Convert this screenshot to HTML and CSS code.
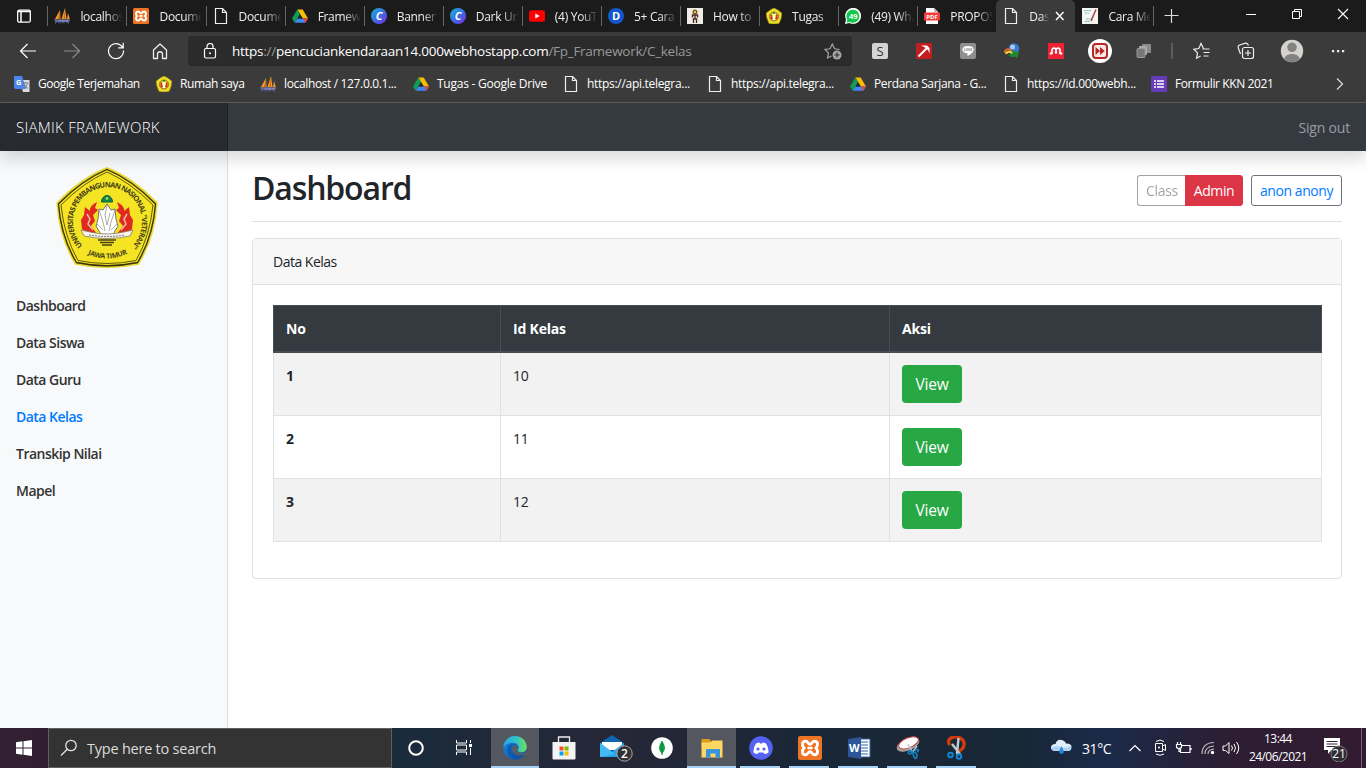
FILE: index.html
```html
<!DOCTYPE html>
<html lang="id">
<head>
<meta charset="utf-8">
<title>Dashboard</title>
<link rel="stylesheet" href="styles.css">
</head>
<body>
<svg class="defs" width="0" height="0" aria-hidden="true">
  <defs>
    <linearGradient id="canva" x1="0" y1="0" x2="1" y2="1"><stop offset="0" stop-color="#13b5d8"/><stop offset=".5" stop-color="#3b6fe0"/><stop offset="1" stop-color="#7c2ae8"/></linearGradient>
    <linearGradient id="edgeA" x1="0" y1="0" x2="1" y2="0"><stop offset="0" stop-color="#2aa5e8"/><stop offset=".55" stop-color="#2fc3c6"/><stop offset="1" stop-color="#72e05a"/></linearGradient>
    <linearGradient id="edgeB" x1="0" y1="0" x2="1" y2="1"><stop offset="0" stop-color="#1b8fe0"/><stop offset="1" stop-color="#0c4c9c"/></linearGradient>
  </defs>
  <symbol id="i-page" viewBox="0 0 16 16"><path d="M2.500.5h7l4 4v11h-11zM9.500.5v4h4" fill="none" stroke="#eee" stroke-width="1.200"/></symbol>
  <symbol id="i-pma" viewBox="0 0 16 16"><path d="M1 11 6 2l.5 9zM7.500 11 11 0l1.500 11zM13 11l1-6 1.800 6z" fill="#f39a2b"/><path d="M4 11 6 2v9zM9.500 11 11 0v11z" fill="#c96a15"/><path d="M0 11.500h16l-1 2.500H2z" fill="#8c8fb8"/><path d="M1.500 15.500v-3h2v1.500h-2M5 15.500v-3l1.500 2 1.500-2v3M10 15.500v-1.500l1.500-1.500 1.500 1.500v1.500M14.500 12.500v3" fill="none" stroke="#595d94"/></symbol>
  <symbol id="i-xampp" viewBox="0 0 16 16"><rect width="16" height="16" rx="1.500" fill="#ee7425"/><path d="M5 3.500c-2.500 0-2.500 3-1 4.500-1.500 1.500-1.500 4.500 1 4.500 2 0 1.500-2 3-2s1 2 3 2c2.500 0 2.500-3 1-4.500 1.500-1.500 1.500-4.500-1-4.500-2 0-1.500 2-3 2s-1-2-3-2Z" fill="none" stroke="#fff" stroke-width="1.900"/><path d="M6.300 8h3.400" stroke="#fff" stroke-width="1.700"/></symbol>
  <symbol id="i-drive" viewBox="0 0 16 16"><path d="M5.300 1.500h5.400L16 10.500h-5.200z" fill="#fbbc04"/><path d="M5.300 1.500 0 10.500l2.700 4.300L8 6z" fill="#0f9d58"/><path d="M5.400 10.500H16l-2.700 4.300H2.700z" fill="#4285f4"/><path d="m13 10.500 3 0-2.700 4.300-2.300-4.300z" fill="#ea4335"/><path d="M8 6.200 5.600 10.500h5z" fill="#252525"/></symbol>
  <symbol id="i-canva" viewBox="0 0 16 16"><circle cx="8" cy="8" r="8" fill="url(#canva)"/><text x="8" y="12" text-anchor="middle" class="g-canva">C</text></symbol>
  <symbol id="i-upn" viewBox="0 0 16 16"><path d="M8 0q4 1.500 8 5.300-.3 5.500-3 10.200-5 1-10 0Q.3 10.500 0 5.300 4 1.500 8 0Z" fill="#f2df25" stroke="#8c8020" stroke-width=".7"/><circle cx="8" cy="8.500" r="4.500" fill="none" stroke="#756c2a" stroke-width=".9"/><path d="M5 6.500 6.500 11H5zM11 6.500 9.500 11H11z" fill="#d52a20" stroke="#d52a20"/><path d="M8 6v6" stroke="#fff" stroke-width="2.300"/><circle cx="8" cy="5" r="1" fill="#168250"/></symbol>
</svg>

<div class="screen">
  <header class="browser">
    <div class="tabs">
      <div class="tab-menu"><svg width="16" height="16" viewBox="0 0 16 16"><rect x="1.700" y="2.200" width="12.600" height="12" rx="1.500" fill="none" stroke="#fff" stroke-width="1.300"/><path d="M1.500 3.500h13M5 4v10" stroke="#fff" stroke-width="1.500"/></svg></div>
      <div class="tab"><svg class="ico"><use href="#i-pma"/></svg><span>localhost</span></div>
      <div class="tab"><svg class="ico"><use href="#i-xampp"/></svg><span>Document</span></div>
      <div class="tab"><svg class="ico"><use href="#i-page"/></svg><span>Document</span></div>
      <div class="tab"><svg class="ico"><use href="#i-drive"/></svg><span>Framework</span></div>
      <div class="tab"><svg class="ico"><use href="#i-canva"/></svg><span>Banner Y</span></div>
      <div class="tab"><svg class="ico"><use href="#i-canva"/></svg><span>Dark Urba</span></div>
      <div class="tab"><svg class="ico" viewBox="0 0 16 16"><rect y="2.300" width="16" height="11.500" rx="2.500" fill="#f00"/><path d="m6.300 5.500 4.500 2.500-4.500 2.600z" fill="#fff"/></svg><span>(4) YouTu</span></div>
      <div class="tab"><svg class="ico" viewBox="0 0 16 16"><circle cx="8" cy="8" r="8" fill="#1258cc"/><text x="8" y="12" text-anchor="middle" class="g-d">D</text></svg><span>5+ Cara</span></div>
      <div class="tab"><svg class="ico" viewBox="0 0 16 16"><rect width="16" height="16" fill="#efede4"/><path d="M5.500 9.500V7h5v2.500M8 7v4M6.500 15v-4h3v4" fill="none" stroke="#4b251d" stroke-width="1.300"/><circle cx="8" cy="4" r="2" fill="#e8c632" stroke="#4b251d"/></svg><span>How to</span></div>
      <div class="tab"><svg class="ico"><use href="#i-upn"/></svg><span>Tugas</span></div>
      <div class="tab"><svg class="ico" viewBox="0 0 16 16"><path d="M0 16 1 11.500A8 8 0 1 1 4.500 15z" fill="#fff"/><path d="m1.700 14.500.6-3a6.500 6.500 0 1 1 2.500 2.400z" fill="#12c74b"/><text x="8.200" y="10.900" text-anchor="middle" class="g-wa">49</text></svg><span>(49) Wha</span></div>
      <div class="tab"><svg class="ico" viewBox="0 0 16 16"><path d="M2 0h8l4 4v12H2z" fill="#fff"/><path d="M10 0v4h4" fill="#bbb"/><rect y="4.500" width="16" height="8" rx="1" fill="#f73a38"/><text x="8" y="10.900" text-anchor="middle" class="g-pdf">PDF</text></svg><span>PROPOSA</span></div>
      <div class="tab active"><svg class="ico"><use href="#i-page"/></svg><span>Dashb</span><svg class="tab-x" width="10" height="10" viewBox="0 0 10 10"><path d="m1 1 7.500 8M8.500 1 1 9" stroke="#fff" stroke-width="1.500"/></svg></div>
      <div class="tab last"><svg class="ico" viewBox="0 0 16 16"><rect width="16" height="16" fill="#f4f4f1"/><path d="M2 2.500h7M3 5h4M4 11h6M3 13.500h5" stroke="#7abad6" stroke-dasharray="2 .5"/><path d="M14 1.500 9 13" stroke="#a9403a" stroke-width="1.500"/></svg><span>Cara Men</span></div>
      <svg class="plus" width="15" height="15" viewBox="0 0 15 15"><path d="M7.500 1v14M.500 7.500h14" stroke="#ddd" stroke-width="1.200"/></svg>
      <div class="win">
        <svg width="12" height="12"><path d="M1 6.500h10" stroke="#fff"/></svg>
        <svg width="12" height="12"><path d="M1.500 3.500h7v7h-7zM3.500 3.500v-2h7v7h-2" fill="none" stroke="#fff"/></svg>
        <svg width="12" height="12"><path d="m1 1 10 10M11 1 1 11" stroke="#fff" stroke-width="1.100"/></svg>
      </div>
    </div>

    <div class="toolbar">
      <div class="nav-btns">
        <svg width="18" height="18" viewBox="0 0 18 18"><path d="M17 9H1.500M8.500 2l-7 7 7 7" fill="none" stroke="#fff" stroke-width="1.200"/></svg>
        <svg width="18" height="18" viewBox="0 0 18 18"><path d="M1 9h15.500M9.500 2l7 7-7 7" fill="none" stroke="#8a8a8a" stroke-width="1.200"/></svg>
        <svg width="18" height="18" viewBox="0 0 18 18"><path d="M16.500 8.500A7.500 7.500 0 1 1 14 3.500l2 2M16.200.8v5h-5" fill="none" stroke="#fff" stroke-width="1.200"/></svg>
        <svg width="18" height="18" viewBox="0 0 18 18"><path d="M2.500 8 9 2l6.500 6v8.500h-4V12c0-3-5-3-5 0v4.500h-4z" fill="none" stroke="#eee" stroke-width="1.300" stroke-linejoin="round"/></svg>
      </div>
      <div class="address">
        <svg width="14" height="16" viewBox="0 0 14 16"><rect x="1.500" y="5.500" width="11" height="9.500" rx="1.500" fill="none" stroke="#fff" stroke-width="1.200"/><path d="M4 5.500v-2c0-4 6-4 6 0v2" fill="none" stroke="#fff" stroke-width="1.200"/><circle cx="7" cy="10.300" r="1" fill="#fff"/></svg>
        <div class="url">https<i>://</i>pencuciankendaraan14.000webhostapp.com<i>/Fp_Framework/C_kelas</i></div>
        <svg width="18" height="17" viewBox="0 0 18 17"><path d="M7.500 13 3.500 15l1-5L1 6.500l5-.7L8.300 1l2.300 4.800 5 .7" fill="none" stroke="#a6a6a6" stroke-width="1.200"/><circle cx="13" cy="12" r="4.500" fill="#a6a6a6"/><path d="M13 9.500v5M10.500 12h5" stroke="#2b2b2b" stroke-width="1.200"/></svg>
      </div>
      <div class="ext">
        <svg class="ico" viewBox="0 0 16 16"><rect width="16" height="16" rx="2" fill="#d4d4d4"/><text x="8" y="12.500" text-anchor="middle" class="g-s">S</text></svg>
        <svg class="ico" viewBox="0 0 16 16"><rect width="16" height="16" rx="1" fill="#c01f1f"/><path d="M2.500 13.500 12 4" fill="none" stroke="#fff" stroke-width="1.900"/><path d="M5 2.500h6l2.500 2.500v6q-1-4-3-5.500T5 2.500" fill="#fff"/></svg>
        <svg class="ico" viewBox="0 0 16 16"><rect width="16" height="16" rx="2" fill="#8f8f8f"/><path d="M8 3C.3 3 1 10 7.500 10.500v2.500C16 9 15.500 3 8 3" fill="#fff"/><text x="8" y="8.300" text-anchor="middle" class="g-line">LINE</text></svg>
        <svg class="ico" viewBox="0 0 16 16"><circle cx="10" cy="5.500" r="5.300" fill="#397bd2"/><circle cx="8.500" cy="4" r="2.500" fill="#a7cbf2"/><path d="M.5 10C1 6 4 5 8 8" fill="none" stroke="#e8662a" stroke-width="2"/><path d="M2 11c1-3 4-3 7 0" fill="none" stroke="#e9df32" stroke-width="2"/><path d="M4 11.500c3 .5 4-.5 5-2.500L7.500 7l7.500 2.500-2 6-1.500-2c-3 1.500-6 0-7.500-2" fill="#1c8b2c"/></svg>
        <svg class="ico" viewBox="0 0 16 16"><rect width="16" height="16" fill="#ee2233"/><path d="M4 11V7c0-2.500 4-2.500 4 0v2M8 9V7c0-2.500 4-2.500 4 0v4" fill="none" stroke="#fff" stroke-width="1.700"/><circle cx="3" cy="10.500" r="1.300" fill="#fff"/><circle cx="8" cy="9.500" r="1.300" fill="#fff"/><circle cx="13" cy="10.500" r="1.300" fill="#fff"/></svg>
        <svg width="24" height="24" viewBox="0 0 24 24"><circle cx="12" cy="12" r="12" fill="#fff"/><rect x="5" y="5" width="14" height="14" rx="3" fill="#f8e7e5" stroke="#b62824" stroke-width="2"/><path d="m7.500 8 4.500 4-4.500 4zM12 8l4.800 4-4.800 4z" fill="#b62824"/></svg>
        <svg class="ico" viewBox="0 0 16 16"><rect x="6" y="1" width="9" height="9" rx="1" fill="#8a8a8a"/><rect x="3" y="3" width="8" height="9" rx="1" fill="#aaa"/><rect x="1" y="5.500" width="8" height="9" rx="1" fill="#777" stroke="#999"/></svg>
      </div>
      <div class="toolbar-sep"></div>
      <div class="ext end">
        <svg width="18" height="18" viewBox="0 0 18 18"><path d="M10.500 6.500 8 1.500 5.800 6.500.8 7.300l3.700 3.600-.9 5.300 4-2.300M9.500 7h7M10.500 10.500h6M10.500 14h5" fill="none" stroke="#eee" stroke-width="1.200"/></svg>
        <svg width="18" height="18" viewBox="0 0 18 18"><rect x="5.500" y="5.500" width="11" height="11" rx="2" fill="none" stroke="#eee" stroke-width="1.200"/><path d="M11 8v6M8 11h6M3.500 12 1.300 6C1 4.800 1.300 3.500 2.600 3L8.500 1.200c1.400-.3 2.300.3 3 2.300" fill="none" stroke="#eee" stroke-width="1.200"/></svg>
        <svg width="24" height="24" viewBox="0 0 24 24"><clipPath id="av"><circle cx="12" cy="12" r="11.200"/></clipPath><g clip-path="url(#av)"><path d="M0 0h24v24H0z" fill="#d5d3d0"/><circle cx="12" cy="8.300" r="4.800" fill="#858381"/><path d="M4 24v-3c0-8 16-8 16 0v3z" fill="#858381"/></g></svg>
        <svg width="16" height="16" viewBox="0 0 16 16"><path d="M2 7h2.200v2.200H2zM7 7h2.200v2.200H7zM12 7h2.200v2.200H12z" fill="#eee"/></svg>
      </div>
    </div>

    <div class="bookmarks">
      <div class="bm"><svg class="ico" viewBox="0 0 16 16"><path d="M6 4h9.500v12H9z" fill="#d8dadb"/><path d="M0 0h8l4 13H1.500Q0 13 0 11z" fill="#4c86ec"/><text x="4.700" y="8.700" text-anchor="middle" class="g-gt">G</text><path d="M9 7h5.500M11.500 6v1M10 7.500q1 4 4 5M13.500 7.500q-1 4-4 5" fill="none" stroke="#6f7b83" stroke-width=".9"/></svg><span class="b1">Google Terjemahan</span></div>
      <div class="bm"><svg class="ico"><use href="#i-upn"/></svg><span class="b2">Rumah saya</span></div>
      <div class="bm"><svg class="ico"><use href="#i-pma"/></svg><span class="b3">localhost / 127.0.0.1...</span></div>
      <div class="bm"><svg class="ico"><use href="#i-drive"/></svg><span class="b4">Tugas - Google Drive</span></div>
      <div class="bm"><svg class="ico"><use href="#i-page"/></svg><span class="b5">https://api.telegra...</span></div>
      <div class="bm"><svg class="ico"><use href="#i-page"/></svg><span class="b5">https://api.telegra...</span></div>
      <div class="bm"><svg class="ico"><use href="#i-drive"/></svg><span class="b7">Perdana Sarjana - G...</span></div>
      <div class="bm"><svg class="ico"><use href="#i-page"/></svg><span class="b8">https://id.000webh...</span></div>
      <div class="bm"><svg class="ico" viewBox="0 0 16 16"><rect width="16" height="16" rx="1" fill="#673ab7"/><path d="M3 5h2M3 8h2M3 11h2M6 5h7M6 8h7M6 11h7" stroke="#fff" stroke-width="1.600"/></svg><span class="b9">Formulir KKN 2021</span></div>
      <svg width="8" height="12" viewBox="0 0 8 12"><path d="m1 .5 5.500 5.500L1 11.500" fill="none" stroke="#ddd" stroke-width="1.200"/></svg>
    </div>
  </header>

  <div class="page">
    <nav class="navbar"><a class="brand">SIAMIK FRAMEWORK</a><a class="signout">Sign out</a></nav>
    <div class="body">
      <aside class="sidebar">
        <svg class="logo" width="102" height="102" viewBox="0 0 102 102">
          <defs><path id="arc" d="M28 80A34.500 34.500 0 1 1 75 80"/><path id="base" d="M29 86Q51 97 73 86"/></defs>
          <path d="M51 .8Q77 11 101 36 99 70 82.500 97 51 104 19.500 97 3 70 1 36 25 11 51 .8Z" fill="#b9a914" stroke="#e7dc3e" stroke-width="1.500"/>
          <path d="M51 2.500Q76 13 99.500 37 97 70 81.500 95.500 51 102 20.500 95.500 5 70 2.500 37 26 13 51 2.500Z" fill="#f4e424" stroke="#38310c" stroke-width="1.300"/>
          <path d="M51 5Q74 15 97 38 94 69 80 93.500 51 99.500 22 93.500 8 69 5 38 28 15 51 5Z" fill="none" stroke="#50480f" stroke-width=".9"/>
          <text class="g-arc"><textPath href="#arc" textLength="162" startOffset="2">UNIVERSITAS PEMBANGUNAN NASIONAL "VETERAN"</textPath></text>
          <text class="g-base"><textPath href="#base" textLength="41" startOffset="3">JAWA TIMUR</textPath></text>
          <path d="M41 35q-8 4-7 9l-5-4-1 8-3 5 1 9 5 5h10l-6-8 4-5-2-6 5-5-3-2zM61 35q8 4 7 9l5-4 1 8 3 5-1 9-5 5H61l6-8-4-5 2-6-5-5 3-2z" fill="#df2a20"/>
          <path d="m31 47 3 5-2 5 5 6M71 47l-3 5 2 5-5 6" fill="none" stroke="#f7b7a6" stroke-width="1.500"/>
          <path d="M45.500 35a5.500 6.500 0 0 1 11 0z" fill="#12854c" stroke="#096036"/><circle cx="51" cy="31.500" r="1.300" fill="#c9dc64"/>
          <path d="m51 37-4 6-4-1-1 10-2 7 6 10h10l6-10-2-7-1-10-4 1z" fill="#fff" stroke="#75736a"/>
          <path d="m51 38-2 10 2 10 3-12M43 43l4 12 2 9M59 43l-4 12-2 9M40 56l7 7M62 56l-7 7" fill="none" stroke="#99978e" stroke-width=".8"/>
          <path d="m25 63 9 2q17 4 34 0l9-2-3 6q-23 5-46 0z" fill="#f7f5eb" stroke="#807b67" stroke-width=".8"/><path d="M33 68q18 3 36 0" fill="none" stroke="#777" stroke-dasharray="2 1"/>
          <path d="M42 73h18M44 75.500h14M46 78h10" stroke="#494112" stroke-width="1.500"/>
        </svg>
        <ul class="menu"><li>Dashboard</li><li>Data Siswa</li><li>Data Guru</li><li class="current">Data Kelas</li><li>Transkip Nilai</li><li>Mapel</li></ul>
      </aside>
      <main class="main">
        <div class="head">
          <h1>Dashboard</h1>
          <div class="actions">
            <div class="group"><button class="btn cls" disabled>Class</button><button class="btn admin">Admin</button></div>
            <button class="btn user">anon anony</button>
          </div>
        </div>
        <section class="card">
          <div class="card-head"><span>Data Kelas</span></div>
          <div class="card-body">
            <table>
              <colgroup><col class="c1"><col class="c2"><col class="c3"></colgroup>
              <thead><tr><th>No</th><th>Id Kelas</th><th>Aksi</th></tr></thead>
              <tbody>
                <tr><th>1</th><td>10</td><td><a class="view">View</a></td></tr>
                <tr><th>2</th><td>11</td><td><a class="view">View</a></td></tr>
                <tr><th>3</th><td>12</td><td><a class="view">View</a></td></tr>
              </tbody>
            </table>
          </div>
        </section>
      </main>
    </div>
  </div>

  <footer class="taskbar">
    <div class="start"><svg width="16" height="16" viewBox="0 0 16 16"><path d="M0 2.200 6.500 1.300v6.200H0zM7.500 1.200 16 0v7.500H7.500zM0 8.500h6.500v6.200L0 13.800zM7.500 8.500H16V16l-8.500-1.200z" fill="#fff"/></svg></div>
    <div class="search"><svg width="18" height="18" viewBox="0 0 18 18"><circle cx="11" cy="6.500" r="5.200" fill="none" stroke="#e4e4e4" stroke-width="1.300"/><path d="m7.200 10.300-6.200 6.200" stroke="#e4e4e4" stroke-width="1.300"/></svg><span>Type here to search</span></div>
    <div class="apps">
      <div class="app"><svg width="18" height="18" viewBox="0 0 18 18"><circle cx="9" cy="9" r="6.800" fill="none" stroke="#fff" stroke-width="2"/></svg></div>
      <div class="app view-btn"><svg width="18" height="18" viewBox="0 0 18 18"><path d="M1.500 1v3h10V1M1.500 16v-3h10v3M1.500 6h10v5h-10zM15.500 1v3M15.500 9v7" fill="none" stroke="#fff"/><path d="M14 5h3v3h-3z" fill="#fff"/></svg></div>
      <div class="app open lit"><svg width="24" height="24" viewBox="0 0 24 24"><circle cx="12" cy="12" r="11.800" fill="url(#edgeB)"/><path d="M.5 11C1.500-4 23-3 23.800 11c.2 6-8 6.500-9 3.500-.2-1 1-1.500 1-3.500C15 6 5 5 .5 11Z" fill="url(#edgeA)"/><path d="M8.500 12c-.5 6 6 10 13 6-7 9-19 4-17-6 1-5 7-5 9-3-2-.5-4 0-5 3Z" fill="#104ea2" opacity=".65"/><path d="M14.500 14.500c-.3 1.500 2.500 3 6.500 2.500l3-2.500v5l-3-.8C15 21 9 18 9 13c0-2 1.500-3.500 3.500-3.500S16 12 14.500 14.500Z" fill="#545d69"/></svg></div>
      <div class="app"><svg width="24" height="24" viewBox="0 0 24 24"><path d="M6.500 7V1h11v6" fill="none" stroke="#eee" stroke-width="1.300"/><path d="M.5 6h23v16.500q0 1-1 1h-21q-1 0-1-1z" fill="#f3f3f3"/><path d="M7.500 10.500h4v4h-4z" fill="#f25022"/><path d="M12.500 10.500h4v4h-4z" fill="#7fba00"/><path d="M7.500 15.500h4v4h-4z" fill="#00a4ef"/><path d="M12.500 15.500h4v4h-4z" fill="#ffb900"/></svg></div>
      <div class="app mail"><svg width="34" height="28" viewBox="0 0 34 28"><path d="m1 9 12-8 12 8v14H1z" fill="#0d65ae"/><path d="M3 8h20v8H3z" fill="#fff"/><path d="m1 9 12 9 12-9v14H1z" fill="#28a3e8"/><path d="M1 23V9l15 11z" fill="#45b9f1"/><circle cx="25.500" cy="19.500" r="7.700" fill="#303135" stroke="#aaa"/><text x="25.500" y="24" text-anchor="middle" class="g-badge">2</text></svg></div>
      <div class="app mongo"><svg width="22" height="22" viewBox="0 0 22 22"><circle cx="11" cy="11" r="10.800" fill="#fff"/><path d="M11 4q-6 6.500 0 13 6-6.500 0-13" fill="#13a34d"/><path d="M11 4v14" stroke="#167c3b"/></svg></div>
      <div class="app open lit"><svg width="24" height="24" viewBox="0 0 24 24"><path d="M1.500 3h8l2 2.500V10h-10z" fill="#dd9d16"/><path d="M1.500 6.500h9l2-2H22.500v17h-21z" fill="#ffd661"/><path d="M6 21.500V14q0-1 1-1h12q1 0 1 1v7.500h-4.500v-4h-5v4z" fill="#3794dd"/></svg></div>
      <div class="app open"><svg width="24" height="24" viewBox="0 0 24 24"><circle cx="12" cy="12" r="11.800" fill="#5562f1"/><path d="M7 7.500q2-1 3.500-1l.5 1h2l.5-1q1.500 0 3.500 1 3 4.500 2.500 9-2 1.500-4 1.500l-1-1.500h-5L8.500 18q-2 0-4-1.500-.5-4.500 2.500-9" fill="#fff"/><circle cx="9" cy="13" r="1.600" fill="#5562f1"/><circle cx="15" cy="13" r="1.600" fill="#5562f1"/></svg></div>
      <div class="app open"><svg width="24" height="24"><use href="#i-xampp"/></svg></div>
      <div class="app open"><svg width="24" height="24" viewBox="0 0 24 24"><path d="M12 3h11v18H12z" fill="#fff" stroke="#3965a7"/><path d="M14 6h7M14 9h7M14 12h7M14 15h7M14 18h7" stroke="#3965a7" stroke-width="1.200"/><path d="m1 3 13-2v22L1 21z" fill="#2b579a"/><text x="7.300" y="16.300" text-anchor="middle" class="g-word">W</text></svg></div>
      <div class="app open"><svg width="24" height="24" viewBox="0 0 24 24"><ellipse cx="12" cy="8.500" rx="11.500" ry="5.500" transform="rotate(-23 12 8.500)" fill="#aaa" stroke="#999"/><ellipse cx="12.500" cy="6.800" rx="10.500" ry="5" transform="rotate(-23 12.500 6.800)" fill="#fff" stroke="#c63b42"/><path d="m12 8 5 9M21 10l-5 7" stroke="#b9cbd6" stroke-width="1.500"/><path d="M16.500 16c-4-3-6 2-2 2zM17 16c0 5 3 9 4 4 0-3-2-4-4-4zM19 15c1-3 5-1 2.500 1" fill="none" stroke="#1681c2" stroke-width="1.700"/></svg></div>
      <div class="app open"><svg width="24" height="24" viewBox="0 0 24 24"><path d="M5 9C0 3 9-1 15 2c7 4 4 11-1 13" fill="none" stroke="#cf3b0d" stroke-width="3.500"/><path d="m13.500 2-1.500 16M7 8l8 10" stroke="#c1c8cc" stroke-width="2.500"/><circle cx="5.500" cy="19" r="2.200" fill="none" stroke="#1486d5" stroke-width="2"/><circle cx="14" cy="20.500" r="2.200" fill="none" stroke="#1486d5" stroke-width="2"/></svg></div>
    </div>
    <div class="tray">
      <svg class="weather" width="21" height="18" viewBox="0 0 21 18"><path d="M5 12Q0 12 0 8.500T4.500 5Q6 0 10.500 1 14 1.500 15 4.500q6 0 5.500 4T16 12z" fill="#dfecfa"/><path d="M5 12Q1 12 0 9q5-3 10-1t10-1q1 5-4 5z" fill="#acd2f7"/><path d="m10.500 7 2 4.500q1 3-2 3.500-3-.5-2-3.500z" fill="#2685d8"/></svg>
      <span class="temp">31°C</span>
      <svg class="chev" width="12" height="8"><path d="m.5 7 5.500-5.500L11.500 7" fill="none" stroke="#fff" stroke-width="1.200"/></svg>
      <svg class="cam" width="14" height="18" viewBox="0 0 14 18"><path d="M2.500 4.500h7v8h-7zM9.500 7l3-1.500v6l-3-1.500M3 2.500q4-3 8 0M3 15q4 2.500 8 0" fill="none" stroke="#fff"/><circle cx="6" cy="8.500" r="1" fill="#fff"/></svg>
      <svg class="bat" width="17" height="14" viewBox="0 0 17 14"><path d="M7 4.500h8v7H5.500V8M16 7v2M1.500 3.500h5v2q0 2-2.500 2t-2.500-2zM2.500 1v2.500M5.500 1v2.500M4 7.500v3h1.500" fill="none" stroke="#fff" stroke-width="1.200"/></svg>
      <svg class="wifi" width="14" height="14" viewBox="0 0 14 14"><path d="M1 13Q1 2 13 1.500M4 13Q4 5.500 13 5M7 13Q7 8.500 13 8" fill="none" stroke="#bbb" stroke-width="1.200"/><circle cx="11.500" cy="11.500" r="1.700" fill="#fff"/></svg>
      <svg class="vol" width="18" height="14" viewBox="0 0 18 14"><path d="M1 5h2.500L7 1.500v11L3.500 9.500H1zM9.500 4.500q2 2.500 0 5M12 3q3 4 0 8M14.500 1q4.500 6 0 12" fill="none" stroke="#fff"/></svg>
      <div class="clock"><span class="time">13:44</span><span class="date">24/06/2021</span></div>
      <svg class="notif" width="26" height="28" viewBox="0 0 26 28"><path d="M1 4h16v12H8.500L5 20v-4H1z" fill="#fff"/><path d="M3.500 7.500h11M3.500 10h11M3.500 12.500h11" stroke="#33243a"/><circle cx="16" cy="20" r="8" fill="#2f2e35" stroke="#777"/><text x="16" y="24.300" text-anchor="middle" class="g-count">21</text></svg>
    </div>
  </footer>
</div>
</body>
</html>
```

FILE: styles.css
```css
* { box-sizing: border-box; }
body { margin: 0; font-family: "Open Sans", "Noto Sans", sans-serif; color: #212529; }
svg { display: block; flex: none; }
.defs { position: absolute; }
.screen { display: flex; flex-direction: column; width: 1366px; height: 768px; overflow: hidden; background: #fff; }
.ico { width: 16px; height: 16px; }

/* browser chrome */
.browser { height: 103px; background: #3b3b3b; border-bottom: 1px solid #5d5d5d; color: #fff; font-size: 12px; }
.tabs { display: flex; height: 32px; background: #1b1b1b; }
.tab-menu { flex: none; width: 47.400px; padding: 8px 0 0 16px; }
.tab { display: flex; flex: none; align-items: center; width: 79.080px; padding-left: 7px; position: relative; white-space: nowrap; color: #eee; }
.tab::before { content: ""; position: absolute; left: 0; top: 6px; width: 1px; height: 20px; background: #666; }
.tab span { width: 43px; margin-left: 10px; overflow: hidden; letter-spacing: -.3px; -webkit-mask-image: linear-gradient(90deg, #000 60%, transparent); mask-image: linear-gradient(90deg, #000 60%, transparent); }
.tab.active { background: #3b3b3b; border-radius: 5px 5px 0 0; }
.tab.active::before { display: none; }
.tab.active span { width: 20px; }
.tab-x { margin-left: 6px; }
.tab.last::before { left: auto; right: 0; }
.plus { margin: 8px 0 0 10px; }
.win { display: flex; gap: 34px; margin: 8px 17px 0 auto; }
.toolbar { display: flex; align-items: center; height: 38px; }
.nav-btns { display: flex; gap: 26px; padding-left: 19px; width: 188px; }
.address { display: flex; align-items: center; width: 664px; height: 30px; padding: 0 10px 0 15px; border-radius: 4px; background: #2b2b2b; }
.url { flex: 1; margin-left: 15px; font-size: 13.500px; letter-spacing: -.27px; white-space: nowrap; }
.url i { font-style: normal; color: #999; }
.ext { display: grid; grid-template-columns: repeat(7, 44px); justify-items: center; align-items: center; margin-left: 6px; }
.toolbar-sep { width: 2px; height: 16px; margin: 0 7px 0 5px; background: #5c5c5c; }
.ext.end { grid-template-columns: 44px 44px 47px 46px; margin-left: 0; }
.bookmarks { display: grid; grid-template-columns: 142px 104px 153px 150px 144px 143px 153px 148px 185px 8px; align-items: center; height: 28px; padding: 0 0 1px 14px; }
.bm { display: flex; align-items: center; gap: 8px; white-space: nowrap; letter-spacing: -.3px; }
.b1 { letter-spacing: -.47px; }
.b2, .b3, .b7 { letter-spacing: -.36px; }
.b4 { letter-spacing: -.25px; }
.b9 { letter-spacing: -.4px; }

/* page */
.page { display: flex; flex-direction: column; height: 625px; }
.navbar { display: flex; align-items: center; justify-content: space-between; height: 48px; background: #343a40; box-shadow: 0 8px 16px rgba(0,0,0,.15); position: relative; z-index: 1; }
.brand { width: 228px; height: 48px; padding-left: 16px; line-height: 49px; font-size: 15px; letter-spacing: .27px; font-weight: 300; color: #fff; background: rgba(0,0,0,.25); box-shadow: inset -1px 0 0 rgba(0,0,0,.25); }
.signout { padding-right: 16px; font-size: 14px; line-height: 50px; letter-spacing: -.2px; padding-top: 2px; color: #9a9da0; }
.body { display: flex; flex: 1; }
.sidebar { flex: none; width: 228px; background: #f8f9fa; border-right: 1px solid #dcdddf; }
.logo { margin: 16px 0 0 56px; }
.menu { list-style: none; margin: 18px 0 0; padding: 0; font-size: 14px; font-weight: 600; color: #333; letter-spacing: -.52px; }
.menu li { height: 37px; padding: 8px 16px; line-height: 21px; }
.menu .current { color: #007bff; }
.main { flex: none; width: 1138px; padding: 0 24px; }
.head { display: flex; justify-content: space-between; height: 71px; border-bottom: 1px solid #dee2e6; }
h1 { margin: 16px 0 0; font-size: 32px; font-weight: 600; line-height: 42px; letter-spacing: -1.150px; }
.actions { display: flex; gap: 8px; padding-top: 24px; }
.group { display: flex; }
.btn { height: 31px; padding: 0; border: 1px solid #6c757d; border-radius: 3px; font: 14px/20px "Open Sans", sans-serif; background: transparent; }
.cls { width: 49px; border-radius: 3px 0 0 3px; border-right: 0; opacity: .65; color: #6c757d; letter-spacing: -.3px; }
.admin { width: 57px; margin-left: -1px; width: 58px; border-color: #dc3545; border-radius: 0 3px 3px 0; background: #dc3545; color: #fff; letter-spacing: -.4px; position: relative; }
.user { width: 91px; color: #007bff; letter-spacing: -.43px; }
.card { height: 341px; margin-top: 16px; border: 1px solid #dfdfdf; border-radius: 4px; }
.card-head { height: 46px; padding-left: 20px; line-height: 45px; font-size: 14px; letter-spacing: -.5px; background: #f7f7f7; border-bottom: 1px solid #dfdfdf; }
.card-body { padding: 20px; }
table { width: 1048px; table-layout: fixed; border-collapse: collapse; font-size: 14px; }
.c1 { width: 227px; }
.c2 { width: 389px; }
.c3 { width: 432px; }
th, td { padding: 12px; text-align: left; vertical-align: top; border: 1px solid #dee2e6; line-height: 22px; letter-spacing: -.2px; }
thead th { height: 46px; padding: 11px 12px 10px; line-height: 24px; border-color: #454d55; border-bottom-width: 2px; background: #343a40; color: #fff; font-weight: 700; }
tbody tr { height: 63px; }
tbody tr:nth-child(odd) { background: #f2f2f2; }
.view { display: block; width: 60px; height: 38px; border-radius: 4px; background: #28a745; color: #fff; font-size: 15.500px; line-height: 38px; text-align: center; }

/* taskbar */
.taskbar { display: flex; height: 40px; color: #fff; background: linear-gradient(90deg, #351f33 0, #301f31 50px, #1a2b3b 400px, #262737 620px, #1a2737 800px, #182735 1010px, #1b2a49 1110px, #2c1e34 1220px, #321b30 1366px); }
.start { width: 48px; padding: 12px 16px; }
.search { display: flex; align-items: center; width: 344px; padding-left: 11px; gap: 9px; border: 1px solid #606060; background: #333; color: #ddd; font-size: 14.500px; letter-spacing: -.23px; }
.apps { display: grid; grid-template-columns: 48px 51px 48px 49px 50px 49px 49px 49px 49px 49px 49px 49px; width: 589px; }
.app { display: flex; align-items: center; justify-content: center; position: relative; }
.view-btn { padding-right: 4px; }
.mail { padding-left: 5px; }
.mongo { padding-right: 2px; }
.app.open::after { content: ""; position: absolute; left: 4px; right: 5px; bottom: 0; height: 2px; background: #a6d2f8; }
.app.lit { background: #545660; }
.app.open.lit::after { left: 0; right: 0; }
.tray { display: flex; align-items: center; flex: 1; padding-left: 70px; position: relative; }
.temp { margin-left: 10px; width: 42px; font-size: 14px; letter-spacing: -.4px; }
.chev { margin-left: 5px; }
.cam { margin-left: 12px; }
.bat { margin-left: 8px; }
.wifi { margin-left: 9px; }
.vol { margin-left: 7px; }
.clock { display: flex; flex-direction: column; align-items: center; width: 66px; margin-left: 5px; font-size: 12px; line-height: 18px; letter-spacing: -.55px; }
.notif { margin-left: 12px; }
.tray::after { content: ""; position: absolute; right: 4px; top: 0; width: 1px; height: 40px; background: #6f6070; }

/* lettering inside icons */
text { font-family: "Open Sans", sans-serif; fill: #fff; letter-spacing: 0; }
.g-canva { font: italic 700 11px "Open Sans", sans-serif; }
.g-d { font-size: 11px; font-weight: 700; }
.g-wa { font-size: 7.500px; font-weight: 700; }
.g-pdf { font-size: 6px; font-weight: 700; }
.g-s { font-size: 13px; fill: #333; }
.g-line { font-size: 3.800px; font-weight: 700; fill: #888; }
.g-gt { font-size: 7.500px; font-weight: 700; }
.g-arc { font-size: 7.400px; font-weight: 700; fill: #464119; }
.g-base { font-size: 7px; font-weight: 700; fill: #464119; }
.g-badge { font-size: 12px; font-weight: 600; }
.g-word { font-size: 11px; font-weight: 700; }
.g-count { font-size: 12px; }
```
